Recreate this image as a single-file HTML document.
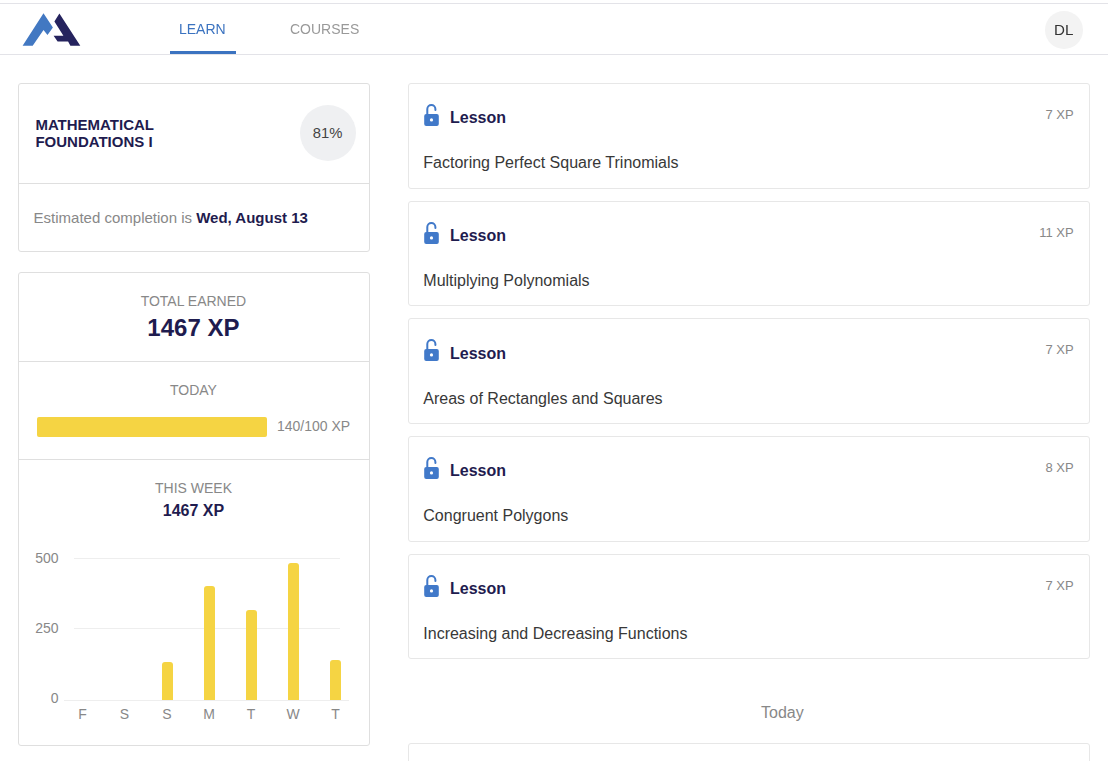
<!DOCTYPE html>
<html><head><meta charset="utf-8">
<style>
*{margin:0;padding:0;box-sizing:border-box}
html,body{width:1108px;height:761px;overflow:hidden;background:#fff;font-family:"Liberation Sans",sans-serif;position:relative}
.a{position:absolute}
.t{position:absolute;white-space:nowrap;line-height:1}
.card{position:absolute;border:1px solid #e7e7e7;border-radius:3px;background:#fff}
.hl{position:absolute;height:1px;background:#e6e6e6}
.navy{color:#1f1c4f}
.gray{color:#888}
.b{font-weight:bold}
</style></head><body>
<div class="hl" style="left:0;top:3px;width:1108px;background:#e3e3e8"></div>
<div class="hl" style="left:0;top:54px;width:1108px;background:#e3e3e8"></div>
<svg class="a" style="left:0;top:0" width="100" height="54" viewBox="0 0 100 54">
<polygon fill="#4278c2" points="43.5,13.3 52.9,27.4 47.5,35 43.5,29.9 32.7,45.8 22.6,45.8"/>
<polygon fill="#25235e" points="59.4,13.6 54.4,21.4 63.4,35.8 53.6,35.8 57.6,41.5 68.1,41.5 70.4,45.8 80.3,45.8"/>
</svg>
<div class="t" style="left:179.4px;top:22px;font-size:14px;color:#3b73c0;will-change:transform">LEARN</div>
<div class="a" style="left:170px;top:51px;width:66px;height:3px;background:#3b73c0"></div>
<div class="t" style="left:290px;top:22px;font-size:14px;color:#999;will-change:transform">COURSES</div>
<div class="a" style="left:1045px;top:11px;width:38px;height:38px;border-radius:50%;background:#f3f3f3"></div>
<div class="t" style="left:1053.6px;top:23px;font-size:14px;color:#333;transform:scaleX(1.08);transform-origin:0 0;will-change:transform">DL</div>

<div class="card" style="left:18px;top:83px;width:352px;height:169px;border-color:#dfdfdf"></div>
<div class="hl" style="left:19px;top:183px;width:350px;background:#dfdfdf"></div>
<div class="t navy b" style="left:35.4px;top:116px;font-size:15px;line-height:17px">MATHEMATICAL<br>FOUNDATIONS I</div>
<div class="a" style="left:300px;top:105px;width:56px;height:56px;border-radius:50%;background:#eff0f2"></div>
<div class="t" style="left:312.7px;top:126px;font-size:14.8px;color:#444">81%</div>
<div class="t" style="left:33.6px;top:210px;font-size:15px;color:#888">Estimated completion is <span class="navy b">Wed, August 13</span></div>

<div class="card" style="left:18px;top:272px;width:352px;height:474px;border-color:#dfdfdf"></div>
<div class="hl" style="left:19px;top:361px;width:350px;background:#dfdfdf"></div>
<div class="hl" style="left:19px;top:459px;width:350px;background:#dfdfdf"></div>
<div class="t gray" style="left:-0.6px;width:388px;text-align:center;top:294px;font-size:14px">TOTAL EARNED</div>
<div class="t navy b" style="left:-0.6px;width:388px;text-align:center;top:316px;font-size:24px">1467 XP</div>
<div class="t gray" style="left:-0.6px;width:388px;text-align:center;top:383px;font-size:14px">TODAY</div>
<div class="a" style="left:37px;top:417px;width:230px;height:20px;border-radius:2px;background:#f5d443"></div>
<div class="t gray" style="left:277px;top:419px;font-size:14px">140/100 XP</div>
<div class="t gray" style="left:-0.5px;width:388px;text-align:center;top:481px;font-size:14px">THIS WEEK</div>
<div class="t navy b" style="left:-0.5px;width:388px;text-align:center;top:503px;font-size:16px">1467 XP</div>
<div class="hl" style="left:74px;top:558px;width:266px;background:#eeeeee"></div>
<div class="hl" style="left:74px;top:628px;width:266px;background:#eeeeee"></div>
<div class="hl" style="left:64px;top:700px;width:285px;background:#eeeeee"></div>
<div class="t gray" style="left:0;width:58.5px;text-align:right;top:551px;font-size:14px">500</div>
<div class="t gray" style="left:0;width:58.5px;text-align:right;top:621px;font-size:14px">250</div>
<div class="t gray" style="left:0;width:58.5px;text-align:right;top:691px;font-size:14px">0</div>
<div class="t gray" style="left:62.5px;width:40px;text-align:center;top:707px;font-size:14px">F</div>
<div class="t gray" style="left:104.5px;width:40px;text-align:center;top:707px;font-size:14px">S</div>
<div class="a" style="left:161.5px;top:661.944px;width:11px;height:38.056000000000004px;background:#f5d443;border-radius:3px 3px 0 0"></div>
<div class="t gray" style="left:147.0px;width:40px;text-align:center;top:707px;font-size:14px">S</div>
<div class="a" style="left:203.5px;top:586.4px;width:11px;height:113.60000000000001px;background:#f5d443;border-radius:3px 3px 0 0"></div>
<div class="t gray" style="left:189.0px;width:40px;text-align:center;top:707px;font-size:14px">M</div>
<div class="a" style="left:245.5px;top:609.972px;width:11px;height:90.028px;background:#f5d443;border-radius:3px 3px 0 0"></div>
<div class="t gray" style="left:231.0px;width:40px;text-align:center;top:707px;font-size:14px">T</div>
<div class="a" style="left:287.5px;top:563.112px;width:11px;height:136.888px;background:#f5d443;border-radius:3px 3px 0 0"></div>
<div class="t gray" style="left:273.0px;width:40px;text-align:center;top:707px;font-size:14px">W</div>
<div class="a" style="left:330.0px;top:660.24px;width:11px;height:39.760000000000005px;background:#f5d443;border-radius:3px 3px 0 0"></div>
<div class="t gray" style="left:315.5px;width:40px;text-align:center;top:707px;font-size:14px">T</div>
<div class="card" style="left:408px;top:83px;width:682px;height:106px"></div>
<svg class="a" style="left:420px;top:100px" width="24" height="30" viewBox="0 0 24 30">
<path d="M7.3 14.5 V9.1 A4.05 4.05 0 0 1 15.4 9.1 V9.9" fill="none" stroke="#4179c9" stroke-width="2" stroke-linecap="round"/>
<rect x="4.2" y="13.9" width="14.6" height="12" rx="2" fill="#4179c9"/>
<circle cx="11.5" cy="19.9" r="1.6" fill="#fff"/>
</svg>
<div class="t navy b" style="left:450px;top:110px;font-size:16px">Lesson</div>
<div class="t" style="left:423.3px;top:155px;font-size:16px;color:#383838">Factoring Perfect Square Trinomials</div>
<div class="t gray" style="right:34.3px;top:108px;font-size:13px">7 XP</div>
<div class="card" style="left:408px;top:201px;width:682px;height:105px"></div>
<svg class="a" style="left:420px;top:218px" width="24" height="30" viewBox="0 0 24 30">
<path d="M7.3 14.5 V9.1 A4.05 4.05 0 0 1 15.4 9.1 V9.9" fill="none" stroke="#4179c9" stroke-width="2" stroke-linecap="round"/>
<rect x="4.2" y="13.9" width="14.6" height="12" rx="2" fill="#4179c9"/>
<circle cx="11.5" cy="19.9" r="1.6" fill="#fff"/>
</svg>
<div class="t navy b" style="left:450px;top:228px;font-size:16px">Lesson</div>
<div class="t" style="left:423.3px;top:273px;font-size:16px;color:#383838">Multiplying Polynomials</div>
<div class="t gray" style="right:34.3px;top:226px;font-size:13px">11 XP</div>
<div class="card" style="left:408px;top:318px;width:682px;height:106px"></div>
<svg class="a" style="left:420px;top:335px" width="24" height="30" viewBox="0 0 24 30">
<path d="M7.3 14.5 V9.1 A4.05 4.05 0 0 1 15.4 9.1 V9.9" fill="none" stroke="#4179c9" stroke-width="2" stroke-linecap="round"/>
<rect x="4.2" y="13.9" width="14.6" height="12" rx="2" fill="#4179c9"/>
<circle cx="11.5" cy="19.9" r="1.6" fill="#fff"/>
</svg>
<div class="t navy b" style="left:450px;top:346px;font-size:16px">Lesson</div>
<div class="t" style="left:423.3px;top:391px;font-size:16px;color:#383838">Areas of Rectangles and Squares</div>
<div class="t gray" style="right:34.3px;top:343px;font-size:13px">7 XP</div>
<div class="card" style="left:408px;top:436px;width:682px;height:106px"></div>
<svg class="a" style="left:420px;top:453px" width="24" height="30" viewBox="0 0 24 30">
<path d="M7.3 14.5 V9.1 A4.05 4.05 0 0 1 15.4 9.1 V9.9" fill="none" stroke="#4179c9" stroke-width="2" stroke-linecap="round"/>
<rect x="4.2" y="13.9" width="14.6" height="12" rx="2" fill="#4179c9"/>
<circle cx="11.5" cy="19.9" r="1.6" fill="#fff"/>
</svg>
<div class="t navy b" style="left:450px;top:463px;font-size:16px">Lesson</div>
<div class="t" style="left:423.3px;top:508px;font-size:16px;color:#383838">Congruent Polygons</div>
<div class="t gray" style="right:34.3px;top:461px;font-size:13px">8 XP</div>
<div class="card" style="left:408px;top:554px;width:682px;height:105px"></div>
<svg class="a" style="left:420px;top:571px" width="24" height="30" viewBox="0 0 24 30">
<path d="M7.3 14.5 V9.1 A4.05 4.05 0 0 1 15.4 9.1 V9.9" fill="none" stroke="#4179c9" stroke-width="2" stroke-linecap="round"/>
<rect x="4.2" y="13.9" width="14.6" height="12" rx="2" fill="#4179c9"/>
<circle cx="11.5" cy="19.9" r="1.6" fill="#fff"/>
</svg>
<div class="t navy b" style="left:450px;top:581px;font-size:16px">Lesson</div>
<div class="t" style="left:423.3px;top:626px;font-size:16px;color:#383838">Increasing and Decreasing Functions</div>
<div class="t gray" style="right:34.3px;top:579px;font-size:13px">7 XP</div>
<div class="card" style="left:408px;top:743px;width:682px;height:100px"></div>
<div class="t gray" style="left:408.4px;width:748px;text-align:center;top:705px;font-size:16px">Today</div>
</body></html>
